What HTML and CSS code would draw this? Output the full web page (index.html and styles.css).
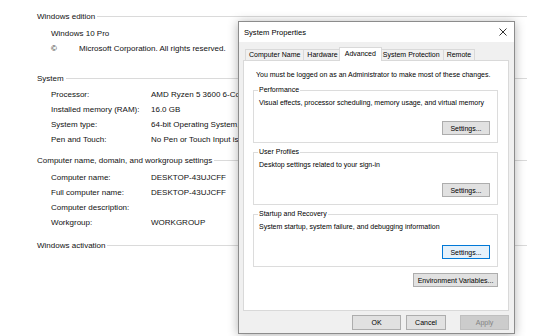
FILE: index.html
```html
<!DOCTYPE html>
<html lang="en">
<head>
    <meta charset="UTF-8">
    <meta name="viewport" content="width=device-width, initial-scale=1.0">
    <title>System</title>
    <link rel="stylesheet" href="styles.css">
</head>
<body>
    <div class="screen">
        <div class="page">
            <div class="head">Windows edition</div>
            <div class="edition">
                <div>Windows 10 Pro</div>
                <div class="copyright"><span class="sign">©</span><span>Microsoft Corporation. All rights reserved.</span></div>
            </div>

            <div class="head head-system">System</div>
            <div class="info">
                <span>Processor:</span><span>AMD Ryzen 5 3600 6-Core Processor 3.59 GHz</span>
                <span>Installed memory (RAM):</span><span>16.0 GB</span>
                <span>System type:</span><span>64-bit Operating System, x64-based processor</span>
                <span>Pen and Touch:</span><span>No Pen or Touch Input is available for this Display</span>
            </div>

            <div class="head head-computer">Computer name, domain, and workgroup settings</div>
            <div class="info info-computer">
                <span>Computer name:</span><span>DESKTOP-43UJCFF</span>
                <span>Full computer name:</span><span>DESKTOP-43UJCFF</span>
                <span>Computer description:</span><span></span>
                <span>Workgroup:</span><span>WORKGROUP</span>
            </div>

            <div class="head head-activation">Windows activation</div>
        </div>

        <div class="dialog">
            <div class="titlebar">
                <span>System Properties</span>
                <svg class="close" width="8" height="8" viewBox="0 0 8 8">
                    <path d="M0.5 0.5 L7.5 7.5 M7.5 0.5 L0.5 7.5" stroke="#1a1a1a" stroke-width="0.9" fill="none"/>
                </svg>
            </div>
            <div class="dlg-body">
                <div class="tabs">
                    <span class="tab">Computer Name</span>
                    <span class="tab">Hardware</span>
                    <span class="tab active">Advanced</span>
                    <span class="tab">System Protection</span>
                    <span class="tab">Remote</span>
                </div>
                <div class="panel">
                    <p class="note">You must be logged on as an Administrator to make most of these changes.</p>

                    <fieldset class="box">
                        <legend>Performance</legend>
                        <p>Visual effects, processor scheduling, memory usage, and virtual memory</p>
                        <div class="actions"><button class="btn-settings">Settings...</button></div>
                    </fieldset>

                    <fieldset class="box">
                        <legend>User Profiles</legend>
                        <p>Desktop settings related to your sign-in</p>
                        <div class="actions"><button class="btn-settings">Settings...</button></div>
                    </fieldset>

                    <fieldset class="box">
                        <legend>Startup and Recovery</legend>
                        <p>System startup, system failure, and debugging information</p>
                        <div class="actions"><button class="btn-settings focused">Settings...</button></div>
                    </fieldset>

                    <div class="env"><button class="btn-env">Environment Variables...</button></div>
                </div>
                <div class="dlg-buttons">
                    <button class="btn-ok">OK</button>
                    <button class="btn-cancel">Cancel</button>
                    <button class="btn-apply" disabled>Apply</button>
                </div>
            </div>
        </div>
    </div>
</body>
</html>
```

FILE: styles.css
```css
body {
    margin: 0;
    background-color: #fff;
    font-family: "Liberation Sans", Arial, sans-serif;
    color: #000;
}
.screen {
    position: relative;
    width: 560px;
    height: 336px;
    overflow: hidden;
}

/* page behind the dialog */
.page {
    width: 490px;
    padding: 9px 0 0 37px;
    font-size: 8px;
    color: #111;
}
.head {
    display: flex;
    align-items: center;
    gap: 2px;
    line-height: 15px;
    white-space: nowrap;
}
.head::after {
    content: "";
    flex: 1;
    border-top: 1px solid #dadada;
}
.head-system {
    margin-top: 15px;
}
.head-computer {
    margin-top: 6px;
}
.head-activation {
    margin-top: 8px;
}
.edition {
    margin-top: 2px;
    padding-left: 14px;
    line-height: 15px;
}
.copyright {
    display: flex;
}
.copyright .sign {
    width: 28px;
}
.info {
    display: grid;
    grid-template-columns: 100px auto;
    margin-top: 1px;
    padding-left: 14px;
    line-height: 15px;
    white-space: nowrap;
}
.info-computer {
    margin-top: 2px;
}

/* System Properties dialog */
.dialog {
    position: absolute;
    left: 238px;
    top: 21px;
    width: 277px;
    height: 313px;
    box-sizing: border-box;
    display: flex;
    flex-direction: column;
    border: 1px solid #8c8c8c;
    background-color: #f0f0f0;
    box-shadow: 0 1px 10px rgba(0, 0, 0, 0.3);
    font-size: 7px;
    color: #000;
}
.titlebar {
    height: 20px;
    display: flex;
    align-items: center;
    justify-content: space-between;
    padding: 0 7px 0 5px;
    background-color: #fff;
    font-size: 7.6px;
}
.dlg-body {
    flex: 1;
    display: flex;
    flex-direction: column;
    padding: 5px 5px 3px 4px;
}
.tabs {
    display: flex;
    align-items: flex-end;
    height: 13px;
    padding-left: 2px;
}
.tab {
    height: 11px;
    box-sizing: border-box;
    padding: 0 3px;
    margin-right: -1px;
    border: 1px solid #d9d9d9;
    border-bottom: none;
    background-color: #f0f0f0;
    line-height: 10px;
    white-space: nowrap;
}
.tab.active {
    position: relative;
    z-index: 1;
    height: 14px;
    margin: 0 -3px -1px -2px;
    padding: 0 5px 2px;
    background-color: #fff;
    line-height: 11px;
}
.panel {
    flex: 1;
    padding: 9px 10px 0 9px;
    border: 1px solid #d9d9d9;
    background-color: #fff;
}
.note {
    margin: 0 0 5px 3px;
    line-height: 10px;
    white-space: nowrap;
}
.box {
    min-width: 0;
    margin: 0 0 4px;
    padding: 0 7px 7px 5px;
    border: 1px solid #dcdcdc;
}
.box legend {
    margin-left: -1px;
    padding: 0 1px;
    line-height: 10px;
}
.box p {
    margin: 3px 0 0;
    line-height: 10px;
    white-space: nowrap;
}
.actions {
    display: flex;
    justify-content: flex-end;
    margin-top: 13px;
}
button {
    height: 14px;
    padding: 0;
    border: 1px solid #adadad;
    background-color: #e1e1e1;
    font-family: inherit;
    font-size: 7px;
    color: #000;
}
.btn-settings {
    width: 48px;
}
.btn-settings.focused {
    background-color: #e5f1fb;
    border-color: #0078d7;
}
.env {
    display: flex;
    justify-content: flex-end;
    margin-top: 6px;
}
.btn-env {
    width: 85px;
}
.dlg-buttons {
    display: flex;
    justify-content: flex-end;
    gap: 5px;
    margin-top: 4px;
}
.dlg-buttons button {
    height: 15px;
}
.btn-ok {
    width: 49px;
}
.btn-cancel {
    width: 40px;
}
.btn-apply {
    width: 49px;
    margin-left: 9px;
    border-color: #bfbfbf;
    background-color: #cccccc;
    color: #838383;
}
```
